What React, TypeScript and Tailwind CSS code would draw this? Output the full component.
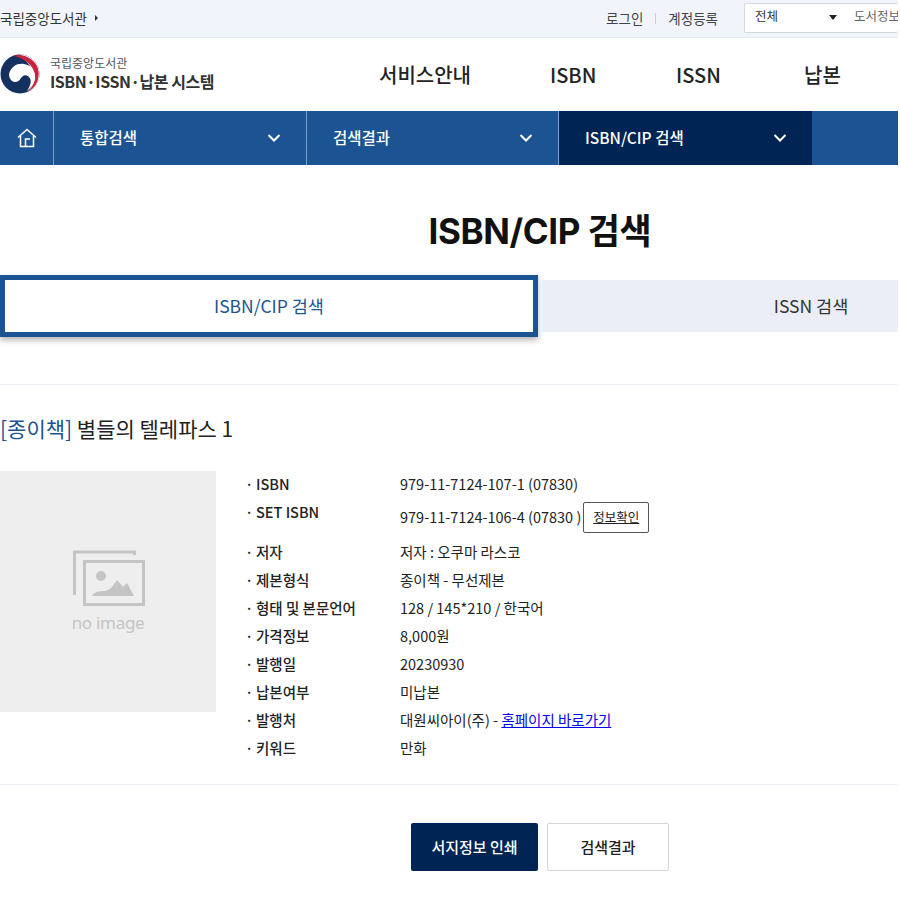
const fontStack = { fontFamily: '"Noto Sans CJK KR", "Noto Sans", sans-serif' };

const navItems = ['서비스안내', 'ISBN', 'ISSN', '납본'];

const rows: { label: string; value: React.ReactNode }[] = [
  { label: '저자', value: '저자 : 오쿠마 라스코' },
  { label: '제본형식', value: '종이책 - 무선제본' },
  { label: '형태 및 본문언어', value: '128 / 145*210 / 한국어' },
  { label: '가격정보', value: '8,000원' },
  { label: '발행일', value: '20230930' },
  { label: '납본여부', value: '미납본' },
  {
    label: '발행처',
    value: (
      <>
        대원씨아이(주) - <a href="#" className="text-[#0000ee] underline">홈페이지 바로가기</a>
      </>
    ),
  },
  { label: '키워드', value: '만화' },
];

const Chevron = () => (
  <svg width="14" height="8" viewBox="0 0 14 8" fill="none" stroke="#fff" strokeWidth="2" className="block">
    <path d="M1.5 1 7 6.5 12.5 1" />
  </svg>
);

const NavTab = ({ label, width, active }: { label: string; width: string; active?: boolean }) => (
  <div className={`flex h-full items-center justify-between pl-[26px] pr-[25px] text-[15.5px] font-medium text-white ${width} ${active ? 'bg-[#002554]' : 'border-r border-[#7ea0c6]'}`}>
    <span>{label}</span>
    <Chevron />
  </div>
);

const Row = ({ label, value }: { label: string; value: React.ReactNode }) => (
  <div className="flex h-[28px] items-center text-[14.5px] text-[#222]">
    <div className="w-[155px] shrink-0 font-medium">
      <span className="inline-block w-[11px]">·</span>
      {label}
    </div>
    <div>{value}</div>
  </div>
);

export default function App() {
  return (
    <div className="h-[897px] w-[898px] overflow-hidden bg-white" style={fontStack}>
      <div className="w-[1080px]">
        <div className="flex h-[38px] w-[898px] items-center border-b border-[#e6e9ef] bg-[#f1f5fb]">
          <span className="text-[13.5px] text-[#333]">국립중앙도서관</span>
          <span className="ml-[8px] mb-[2px] h-0 w-0 border-y-[3px] border-l-[3px] border-y-transparent border-l-[#333]" />
          <span className="ml-auto text-[13.5px] text-[#444]">로그인</span>
          <span className="mx-[12px] h-[11px] w-px bg-[#c9ccd2]" />
          <span className="text-[13.5px] text-[#444]">계정등록</span>
          <div className="ml-[26px] mb-[2px] flex h-[30px] w-[154px] shrink-0 items-center overflow-hidden whitespace-nowrap rounded-[2px] border border-r-0 border-[#d5d8de] bg-white pb-[3px] pl-[10px] text-[12.5px]">
            <span className="text-[#333]">전체</span>
            <span className="ml-[51px] mt-[2px] h-0 w-0 border-x-[4.5px] border-t-[5px] border-x-transparent border-t-[#222]" />
            <span className="ml-[17px] text-[#666]">도서정보</span>
          </div>
        </div>

        <div className="flex h-[73px] w-[898px] items-center">
          <svg width="40" height="40" viewBox="0 0 40 40" className="mb-[2px] shrink-0">
            <circle cx="20" cy="20" r="19.5" fill="#14315f" />
            <path d="M20 .5A19.5 19.5 0 0 1 27 38.200C33 33 36 25 33 17 30 10 25 7 20 .5Z" fill="#fff" />
            <path d="M13 1.800C22-1 32 3 37 12c4 9 1 21-10 26.500C36 31 37 20 31 12 26 6 19 3 13 1.800Z" fill="#c8243f" />
            <path d="M9 20C11 12 18 9 24 10c8 1 12 8 11 15-1 5-4 9-8 12 4-6 5-11 2-14-3-3-6-2-8 1-2 4-6 5-9 3-2-2-3-4-3-7Z" fill="#fff" />
          </svg>
          <div className="mb-[4px] ml-[10px] flex w-[215px] flex-col">
            <span className="text-[12px] leading-[17px] text-[#555]">국립중앙도서관</span>
            <span className="whitespace-nowrap text-[16px] font-bold leading-[21px] tracking-[-0.45px] text-[#333]">ISBN·ISSN·납본 시스템</span>
          </div>
          <div className="ml-[114px] flex text-[20px] font-medium text-[#222]">
            <span className="w-[171px]">{navItems[0]}</span>
            <span className="w-[126px]">{navItems[1]}</span>
            <span className="w-[128px]">{navItems[2]}</span>
            <span>{navItems[3]}</span>
          </div>
        </div>

        <div className="flex h-[54px] w-[898px] items-center bg-[#1c5392]">
          <div className="flex h-full w-[54px] items-center justify-center border-r border-[#7ea0c6]">
            <svg width="20" height="20" viewBox="0 0 20 20" fill="none" stroke="#fff" strokeWidth="1.500">
              <path d="M1 9.500 10 1.500 19 9.500" />
              <path d="M3.500 8v10.500h13V8" />
              <path d="M8.500 18.500V11H13" />
            </svg>
          </div>
          <NavTab label="통합검색" width="w-[253px]" />
          <NavTab label="검색결과" width="w-[252px]" />
          <NavTab label="ISBN/CIP 검색" width="w-[253px]" active />
        </div>

        <h1 className="mt-[40px] text-center text-[35px] font-bold leading-[52px] tracking-[-0.4px] text-[#111]" style={{ fontFamily: 'Inter, "Noto Sans CJK KR", sans-serif' }}>ISBN/CIP 검색</h1>

        <div className="mt-[23px] flex w-[1080px] items-start">
          <div className="-mt-[5px] flex h-[62px] w-[538px] shrink-0 items-center justify-center border-[5px] border-[#1c5392] bg-white text-[17.5px] text-[#1c5392] shadow-[0_3px_6px_rgba(0,0,0,0.3)]">
            ISBN/CIP 검색
          </div>
          <div className="ml-[4px] flex h-[52px] flex-1 items-center justify-center bg-[#ebeef6] text-[17.5px] text-[#333]">
            ISSN 검색
          </div>
        </div>

        <div className="mt-[47px] w-[898px] border-t border-[#eceef3] pb-[22px] pt-[29px]">
          <h2 className="text-[21px] leading-[29px] text-[#222]">
            <span className="text-[#1c5392]">[종이책]</span> 별들의 텔레파스 1
          </h2>

          <div className="mt-[28px] flex">
            <div className="flex h-[241px] w-[216px] shrink-0 flex-col items-center bg-[#eeeeee] pt-[79px]">
              <svg width="72" height="56" viewBox="0 0 72 56" className="ml-[2px]">
                <path d="M1.500 45V2h60v3" fill="none" stroke="#c4c4c4" strokeWidth="3" />
                <rect x="11.500" y="11.500" width="59" height="43" fill="none" stroke="#c4c4c4" strokeWidth="3" />
                <circle cx="28" cy="26" r="5" fill="#c4c4c4" />
                <path d="M19 46c1-4 8-5 13-5 5-1 8-5 12-11l6 7 4-4 7 13Z" fill="#c4c4c4" />
              </svg>
              <span className="mt-[4px] text-[17px] leading-[26px] tracking-[-0.3px] text-[#c4c4c4]" style={{ fontFamily: '"Noto Sans", sans-serif' }}>no image</span>
            </div>

            <div className="-mt-[1px] ml-[29px] min-w-0 flex-1">
              <Row label="ISBN" value="979-11-7124-107-1 (07830)" />
              <div className="flex h-[40px] text-[14.5px] text-[#222]">
                <div className="w-[155px] shrink-0 pt-[2px] font-medium leading-[24px]">
                  <span className="inline-block w-[11px]">·</span>SET ISBN
                </div>
                <div className="flex items-center pb-[2px]">
                  979-11-7124-106-4 (07830 )
                  <span className="ml-[2px] flex h-[31px] w-[66px] items-center justify-center rounded-[2px] border border-[#555] text-[12.5px] underline">정보확인</span>
                </div>
              </div>
              {rows.map((row) => (
                <Row key={row.label} label={row.label} value={row.value} />
              ))}
            </div>
          </div>
        </div>

        <div className="w-[898px] border-t border-[#eceef3]">
          <div className="mt-[38px] flex pl-[411px]">
            <button className="h-[48px] w-[127px] rounded-[2px] bg-[#002554] text-[15px] font-medium text-white">서지정보 인쇄</button>
            <button className="ml-[9px] h-[48px] w-[122px] rounded-[2px] border border-[#d5d5d5] bg-white text-[15px] font-medium text-[#222]">검색결과</button>
          </div>
        </div>
      </div>
    </div>
  );
}
